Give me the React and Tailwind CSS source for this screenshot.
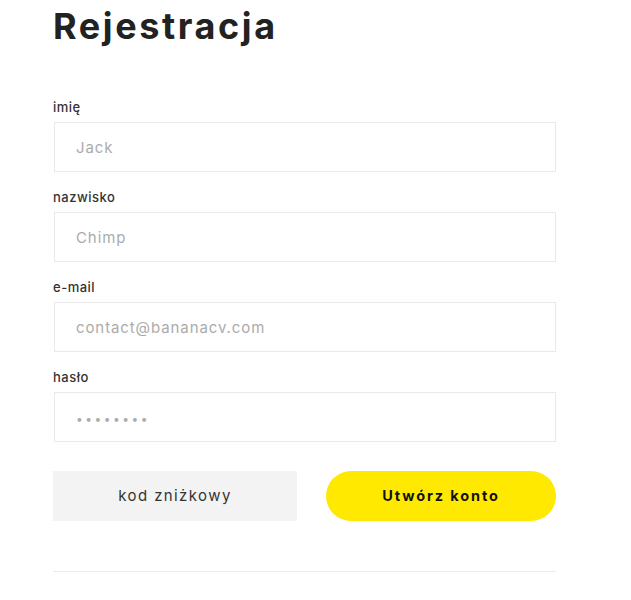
const fields = [
  { id: 'imie', label: 'imię', placeholder: 'Jack', type: 'text' },
  { id: 'nazwisko', label: 'nazwisko', placeholder: 'Chimp', type: 'text' },
  { id: 'email', label: 'e-mail', placeholder: 'contact@bananacv.com', type: 'email' },
  { id: 'haslo', label: 'hasło', placeholder: '••••••••', type: 'password' },
];

export default function App() {
  return (
    <div className="min-h-screen bg-white font-['Inter',sans-serif]">
      <div className="ml-[53px] w-[503px]">
        <h1 className="h-[52px] pt-[4px] text-[36px] leading-[44px] font-bold tracking-[2.6px] text-[#222]">
          Rejestracja
        </h1>

        <form className="mt-[45px] flex flex-col gap-[15px]" onSubmit={(e) => e.preventDefault()}>
          {fields.map((f) => (
            <div key={f.id} className="flex flex-col">
              <label htmlFor={f.id} className="h-[20px] text-[13px] leading-[20px] font-medium tracking-[0.5px] text-[#333]">
                {f.label}
              </label>
              <input
                id={f.id}
                type="text"
                placeholder={f.placeholder}
                className={`mt-[5px] ml-px h-[50px] w-[502px] border border-[#e9e9e9] px-[21px] text-[15px] tracking-[0.9px] text-[#333] outline-none placeholder:text-[#ababab] ${
                  f.type === 'password' ? 'placeholder:text-[12px] placeholder:tracking-[2.5px] placeholder:text-[#9a9a9a]' : ''
                }`}
              />
            </div>
          ))}

          <div className="mt-[14px] flex items-center gap-[29px]">
            <button
              type="button"
              className="h-[50px] w-[244px] bg-[#f3f3f3] text-[15px] tracking-[1.4px] text-[#333]"
            >
              kod zniżkowy
            </button>
            <button
              type="submit"
              className="h-[50px] w-[230px] rounded-full bg-[#ffe900] text-[14.5px] font-bold tracking-[1.9px] text-[#111]"
            >
              Utwórz konto
            </button>
          </div>
        </form>

        <div className="mt-[50px] h-px w-[503px] bg-[#ebebeb]" />
      </div>
    </div>
  );
}
